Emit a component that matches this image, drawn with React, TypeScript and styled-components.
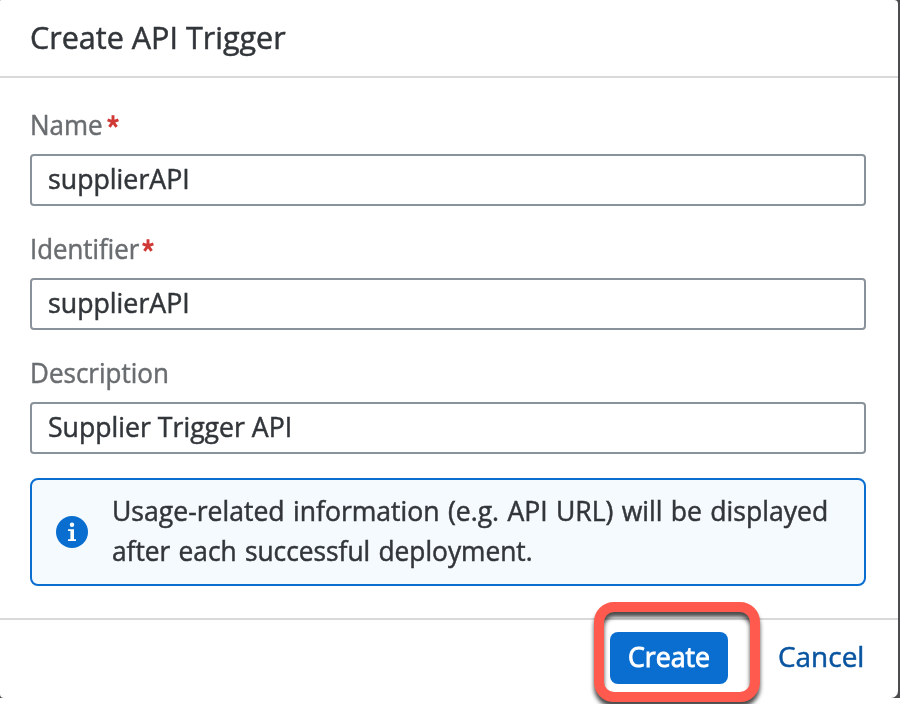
import React from "react";
import styled, { createGlobalStyle } from "styled-components";

const GlobalStyle = createGlobalStyle`
  *, *::before, *::after { box-sizing: border-box; }
  html, body { margin: 0; background: #fff; overflow: hidden; }
  button, input { font: inherit; }
`;

const Page = styled.main`
  width: 900px;
  height: 704px;
  overflow: hidden;
  background: #fff;
  color: #32363a;
  font-family: "Open Sans", "Noto Sans", sans-serif;
  font-size: 27.8px;
  line-height: 40px;
  -webkit-text-stroke: 0.5px currentColor;
`;

const Backdrop = styled.div`
  height: 698px;
  padding-right: 2px;
  background: #4b4c4d;
`;

const Dialog = styled.section`
  display: flex;
  flex-direction: column;
  height: 698px;
  background: #fff;
  border-radius: 1px 4px 7px 4px;
`;

const Header = styled.header`
  flex: none;
  height: 78px;
  padding: 17px 30px 0;
  border-bottom: 2px solid #d9d9d9;
`;

const Title = styled.h1`
  margin: 0;
  font-size: 31px;
  font-weight: 400;
  line-height: 40px;
`;

const Fit = styled.span<{ $x: number }>`
  display: inline-block;
  white-space: nowrap;
  transform: scaleX(${(p) => p.$x});
  transform-origin: left center;
`;

const Body = styled.div`
  flex: none;
  height: 540px;
  padding: 28px 32px 0 30px;
`;

const Field = styled.div`
  height: 124px;
`;

const Label = styled.label`
  display: flex;
  height: 48px;
  color: #6a6d70;
  line-height: 36px;
`;

const LabelText = styled.span<{ $width: number }>`
  width: ${(p) => p.$width}px;
`;

const Asterisk = styled.svg`
  width: 12px;
  height: 13px;
  margin-top: 9px;
`;

const Control = styled.div`
  height: 52px;
  padding: 2px 16px;
  border: 2px solid #89919a;
  border-radius: 4px;
  background: #fff;
`;

const InfoStrip = styled.div`
  display: flex;
  align-items: center;
  height: 108px;
  padding-left: 24px;
  border: 2px solid #0a6ed1;
  border-radius: 8px;
  background: #f5faff;
`;

const InfoIcon = styled.svg`
  flex: none;
  width: 32px;
  height: 32px;
  margin-right: 24px;
`;

const Message = styled.p`
  margin: -5px 0 0;
  word-spacing: 1.5px;
`;

const Footer = styled.footer`
  display: flex;
  flex: 1;
  justify-content: flex-end;
  padding: 12px 16px 0 0;
  border-top: 2px solid #d9d9d9;
`;

const ActionButton = styled.button<{ $primary?: boolean }>`
  width: ${(p) => (p.$primary ? 118 : 122)}px;
  height: 52px;
  padding: 0 0 4px 18px;
  margin-right: ${(p) => (p.$primary ? 32 : 0)}px;
  border: 0;
  border-radius: 8px;
  background: ${(p) => (p.$primary ? "#0a6ed1" : "transparent")};
  color: ${(p) => (p.$primary ? "#fff" : "#0854a0")};
  text-align: left;
  -webkit-text-stroke: ${(p) => (p.$primary ? 0.9 : 0.5)}px currentColor;
`;

const Primary = styled.div`
  position: relative;
`;

const Highlight = styled.div`
  position: absolute;
  left: -16px;
  top: -30px;
  width: 166px;
  height: 100px;
  border: 10px solid #ff5a4d;
  border-radius: 20px;
  filter: drop-shadow(0 5px 2px rgba(0, 0, 0, 0.7));
  pointer-events: none;
`;

interface FieldData {
  label: string;
  labelWidth: number;
  labelScale: number;
  required: boolean;
  value: string;
  valueScale: number;
}

const fields: FieldData[] = [
  { label: "Name", labelWidth: 77, labelScale: 0.935, required: true, value: "supplierAPI", valueScale: 0.962 },
  { label: "Identifier", labelWidth: 112, labelScale: 0.928, required: true, value: "supplierAPI", valueScale: 0.962 },
  { label: "Description", labelWidth: 150, labelScale: 0.936, required: false, value: "Supplier Trigger API", valueScale: 0.959 },
];

export default function App() {
  return (
    <Page>
      <GlobalStyle />
      <Backdrop>
        <Dialog role="dialog" aria-label="Create API Trigger">
          <Header>
            <Title><Fit $x={0.985}>Create API Trigger</Fit></Title>
          </Header>
          <Body>
            {fields.map((f) => (
              <Field key={f.label}>
                <Label>
                  <LabelText $width={f.labelWidth}><Fit $x={f.labelScale}>{f.label}</Fit></LabelText>
                  {f.required && (
                    <Asterisk viewBox="0 0 12 13" aria-label="required">
                      <path d="M6 6.8V.2M6 6.8L.6 4.8M6 6.8l5.4-2M6 6.8l-3.6 5M6 6.8l3.6 5" stroke="#d03a36" strokeWidth="2.9" fill="none" />
                    </Asterisk>
                  )}
                </Label>
                <Control><Fit $x={f.valueScale}>{f.value}</Fit></Control>
              </Field>
            ))}
            <InfoStrip>
              <InfoIcon viewBox="0 0 32 32" aria-hidden="true">
                <circle cx="16" cy="16" r="16" fill="#0a6ed1" />
                <circle cx="16" cy="8.8" r="2.2" fill="#fff" />
                <path d="M12 13.3h6v10h2V25h-8v-1.7h2.4V15H12z" fill="#fff" />
              </InfoIcon>
              <Message>
                <Fit $x={0.956}>Usage-related information (e.g. API URL) will be displayed</Fit>
                <br />
                <Fit $x={0.946}>after each successful deployment.</Fit>
              </Message>
            </InfoStrip>
          </Body>
          <Footer>
            <Primary>
              <ActionButton $primary><Fit $x={0.96}>Create</Fit></ActionButton>
              <Highlight />
            </Primary>
            <ActionButton><Fit $x={1.005}>Cancel</Fit></ActionButton>
          </Footer>
        </Dialog>
      </Backdrop>
    </Page>
  );
}
